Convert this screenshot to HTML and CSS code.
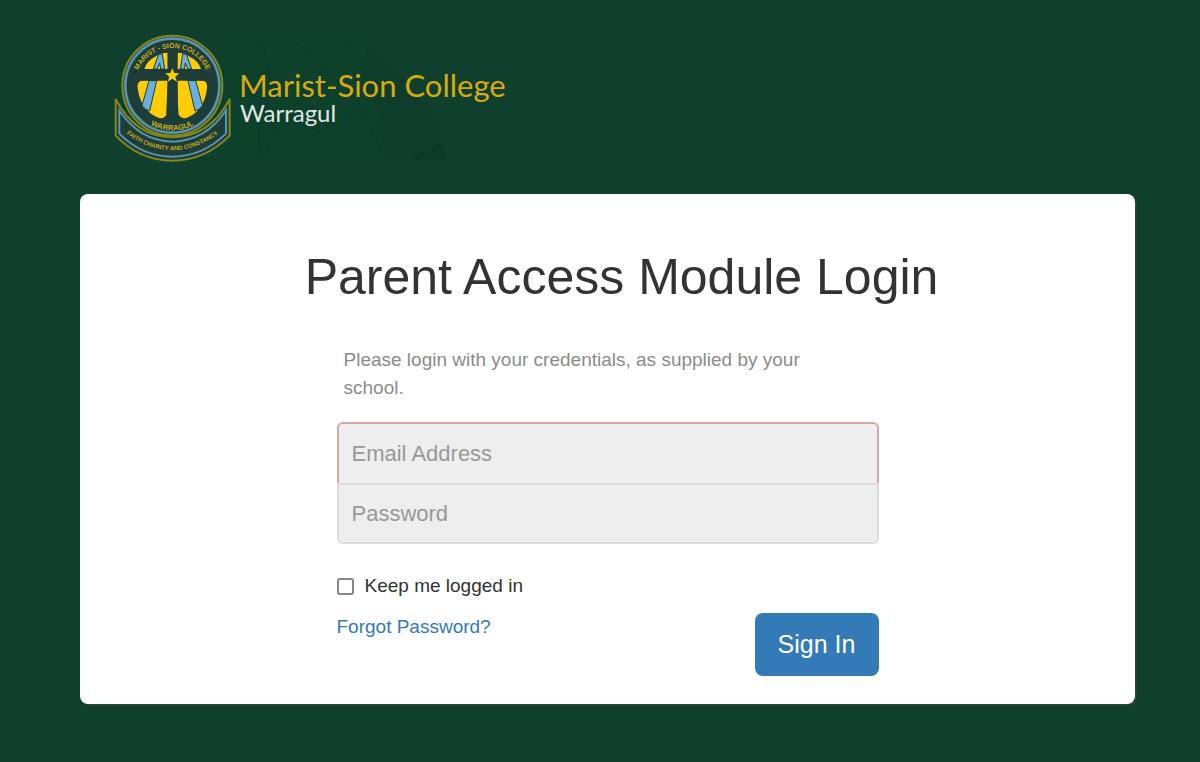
FILE: index.html
```html
<!DOCTYPE html>
<html lang="en">
<head>
  <meta charset="UTF-8">
  <meta name="viewport" content="width=device-width, initial-scale=1.0">
  <title>Parent Access Module Login</title>
  <link rel="stylesheet" href="styles.css">
</head>
<body>
  <header class="header">
    <svg class="logo" viewBox="0 0 400 130" role="img" aria-label="Marist-Sion College Warragul">
      <!-- faint window tracery -->
      <path fill="#0e412c" d="M110 1H225Q315 42 334 126H110z"/>
      <path fill="#0e3e2a" d="M255 14Q319 54 334 126H273Q270 80 250 47z"/>
      <path fill="#0d3927" d="M297 126l33-17 4 17z"/>
      <g fill="none" stroke="#0d3b29" stroke-width="1">
        <path d="M148 1Q156 30 161 60Q138 95 151 126M170 1Q245 40 272 126M242 4L205 45Q175 75 150 126M186 109L272 62M120 25l24-24M130 126l20-17"/>
      </g>
      <!-- crest -->
      <g transform="translate(-7 -9) scale(.3333)">
        <path fill="#1e3d38" stroke="#86881c" stroke-width="6" d="M32 222Q90 335 202 337Q316 335 374 222V332Q300 407 202 407Q104 407 32 332z"/>
        <path fill="none" stroke="#5795ac" stroke-width="6" d="M43 256Q103 348 202 350Q303 348 363 256V326Q292 395 202 395Q112 395 43 326z"/>
        <circle cx="202" cy="182" r="150" fill="#1e3d38" stroke="#86881c" stroke-width="6"/>
        <circle cx="202" cy="182" r="141" fill="none" stroke="#5795ac" stroke-width="8"/>
        <g fill="#ffcc05">
          <path d="M155 92Q172 82 188 83V132H118Q124 108 155 92z"/>
          <path d="M249 92Q232 82 218 83V132H288Q282 108 249 92z"/>
          <path d="M108 167H188V263Q181 282 162 279Q108 259 98 190Q96 171 108 167z"/>
          <path d="M296 167H218V263Q225 282 244 279Q298 259 306 190Q308 171 296 167z"/>
        </g>
        <g fill="#69b0df" stroke="#1e3d38" stroke-width="3">
          <path d="M161 87h11l7 45h-12l-3-18-7 18h-12zM233 87h11l16 45h-12l-7-18-3 18h-12z"/>
          <path d="M132 167h23l-21 91q-13-3-23-16zM249 167h23l21 75q-10 13-23 16z"/>
        </g>
        <path fill="#1e3d38" d="M188 76h30l-2 61q30-2 88-3v34q-58-4-88-3l5 118h-38l5-118q-30-1-88 3v-34q58 1 88 3z"/>
        <path fill="#ffcc05" d="M202 130l6 14 15 1-12 10 5 15-14-9-14 9 5-15-12-10 15-1z"/>
        <path id="arc-top" fill="none" d="M99 137A112 112 0 0 1 305 137"/>
        <path id="arc-bottom" fill="none" d="M110 280A134 134 0 0 0 294 280"/>
        <path id="arc-ribbon" fill="none" d="M58 322Q202 430 346 322"/>
        <g class="crest-text" text-anchor="middle">
          <text font-size="21"><textPath href="#arc-top" startOffset="50%">MARIST - SION COLLEGE</textPath></text>
          <text font-size="23"><textPath href="#arc-bottom" startOffset="50%">WARRAGUL</textPath></text>
          <text font-size="18"><textPath href="#arc-ribbon" startOffset="50%">FAITH CHARITY AND CONSTANCY</textPath></text>
        </g>
      </g>
      <text class="logo-name" x="127" y="63">Marist-Sion College</text>
      <text class="logo-town" x="128" y="88">Warragul</text>
    </svg>
  </header>

  <main class="card">
    <h1 class="title">Parent Access Module Login</h1>
    <form class="login">
      <p class="intro">Please login with your credentials, as supplied by your school.</p>
      <input class="field field-email" type="email" placeholder="Email Address" aria-label="Email Address">
      <input class="field field-password" type="password" placeholder="Password" aria-label="Password">
      <label class="remember"><input class="check" type="checkbox"> Keep me logged in</label>
      <div class="actions">
        <a class="forgot" href="#">Forgot Password?</a>
        <button class="signin" type="submit">Sign In</button>
      </div>
    </form>
  </main>
</body>
</html>
```

FILE: styles.css
```css
* {
  box-sizing: border-box;
}
body {
  margin: 0;
  padding: 34px 65px 56px 80px;
  background-color: #0f402d;
  color: #333;
  font-family: "Liberation Sans", Arial, sans-serif;
  font-size: 19px;
  line-height: 28px;
}

.header {
  padding: 0 32px 30px;
}
.logo {
  display: block;
  width: 400px;
  max-width: 100%;
}
.logo-name,
.logo-town {
  font-family: Lato, sans-serif;
}
.logo-name {
  font-size: 31px;
  fill: #d9aa10;
}
.logo-town {
  font-size: 24px;
  fill: #dfe8e4;
}
.crest-text {
  font-family: "Liberation Sans", Arial, sans-serif;
  font-weight: bold;
  fill: #c9ae1b;
}

.card {
  padding: 53px 32px 28px;
  background-color: #fff;
  border-radius: 8px;
  box-shadow: 1px 1px 2px #444;
}
.title {
  margin: 0 0 39px;
  padding-left: 28px;
  font-size: 50px;
  font-weight: normal;
  line-height: 60px;
  text-align: center;
}
.login {
  max-width: 542px;
  margin: 0 auto;
}
.intro {
  margin: 0 0 20px;
  padding: 0 56px 0 7px;
  color: #8c8c8c;
}

.field {
  display: block;
  width: 100%;
  height: 61px;
  padding: 0 13px;
  border: 2px solid #dcdcdc;
  background-color: #eee;
  font-family: inherit;
  font-size: 22px;
}
.field::placeholder {
  color: #999;
  opacity: 1;
}
.field-email {
  border-color: #d9a5a5;
  border-bottom: 0;
  border-radius: 6px 6px 0 0;
}
.field-password {
  border-radius: 0 0 6px 6px;
}

.remember {
  display: flex;
  align-items: center;
  gap: 11px;
  margin: 28px 0 13px;
}
.check {
  appearance: none;
  width: 17px;
  height: 17px;
  margin: 0;
  border: 2px solid #868686;
  border-radius: 3px;
  background-color: #fff;
}
.check:checked {
  background-color: #337ab7;
}
.actions {
  display: flex;
  justify-content: space-between;
  align-items: flex-start;
}
.forgot {
  color: #337ab7;
  text-decoration: none;
}
.signin {
  width: 124px;
  height: 63px;
  border: 0;
  border-radius: 8px;
  background-color: #337ab7;
  color: #fff;
  font-family: inherit;
  font-size: 25px;
}
```
